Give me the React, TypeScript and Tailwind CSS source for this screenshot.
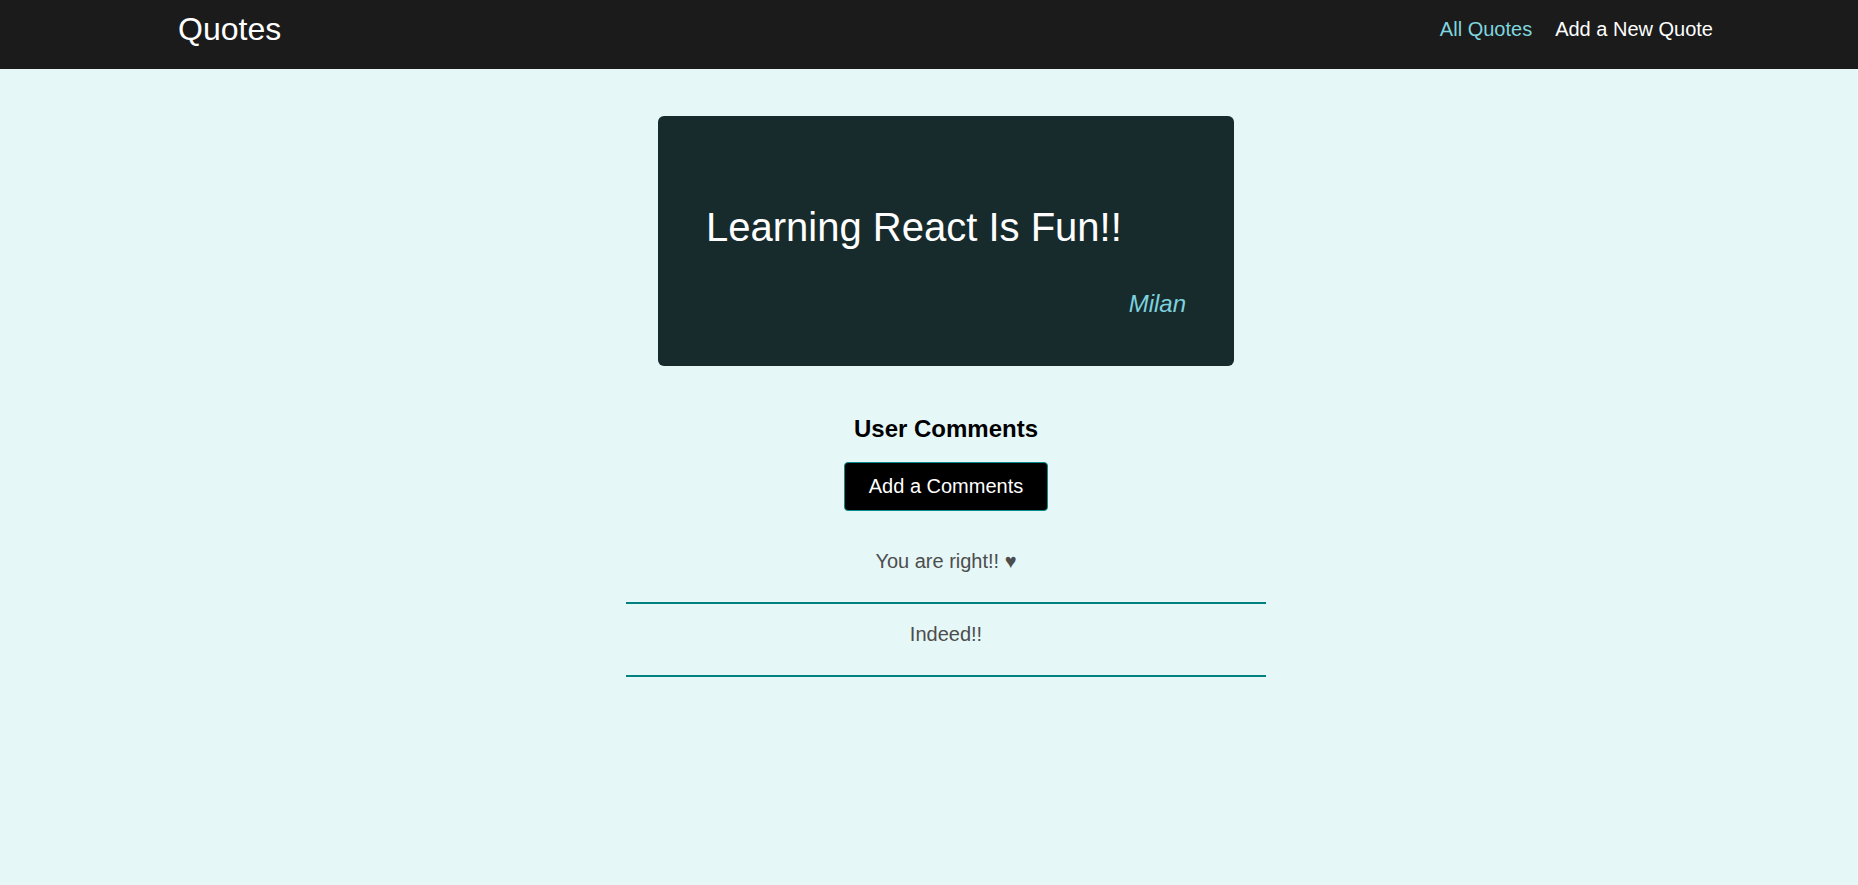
const comments = [
  { id: 'c1', text: 'You are right!! ♥' },
  { id: 'c2', text: 'Indeed!!' },
]

function Header() {
  return (
    <header className="flex h-[69px] items-center justify-between bg-[#1b1b1b] pb-[10px] pl-[178px] pr-[145px]">
      <div className="text-[32px] leading-[1.15] text-white">Quotes</div>
      <nav>
        <ul className="flex items-center gap-[23px] text-[20px] leading-[1.15]">
          <li className="text-[#7fd6df]">All Quotes</li>
          <li className="text-white">Add a New Quote</li>
        </ul>
      </nav>
    </header>
  )
}

function HighlightedQuote() {
  return (
    <figure className="mt-[47px] w-[576px] rounded-md bg-[#172b2d] p-12 text-white">
      <p className="my-10 text-[40px] leading-[1.15]">Learning React Is Fun!!</p>
      <figcaption className="text-right text-2xl leading-[1.15] text-[#7dd2dd] italic">Milan</figcaption>
    </figure>
  )
}

function Comments() {
  return (
    <section className="mt-[49px] flex flex-col items-center">
      <h2 className="text-2xl leading-[1.15] font-bold text-black">User Comments</h2>
      <button className="mt-5 rounded border border-[#0b8a8a] bg-black px-6 py-3 text-[20px] leading-[1.15] text-white">
        Add a Comments
      </button>
      <ul className="mt-5 w-[640px]">
        {comments.map((c) => (
          <li key={c.id} className="border-b-2 border-[#008080] pt-[19px] pb-[29px] text-center text-[20px] leading-[1.15] text-[#4d4d4d]">
            {c.text}
          </li>
        ))}
      </ul>
    </section>
  )
}

export default function App() {
  return (
    <div className="min-h-[885px] bg-[#e5f7f7] font-['Liberation_Sans',Arial,sans-serif]">
      <Header />
      <main className="flex flex-col items-center pl-[34px]">
        <HighlightedQuote />
        <Comments />
      </main>
    </div>
  )
}
